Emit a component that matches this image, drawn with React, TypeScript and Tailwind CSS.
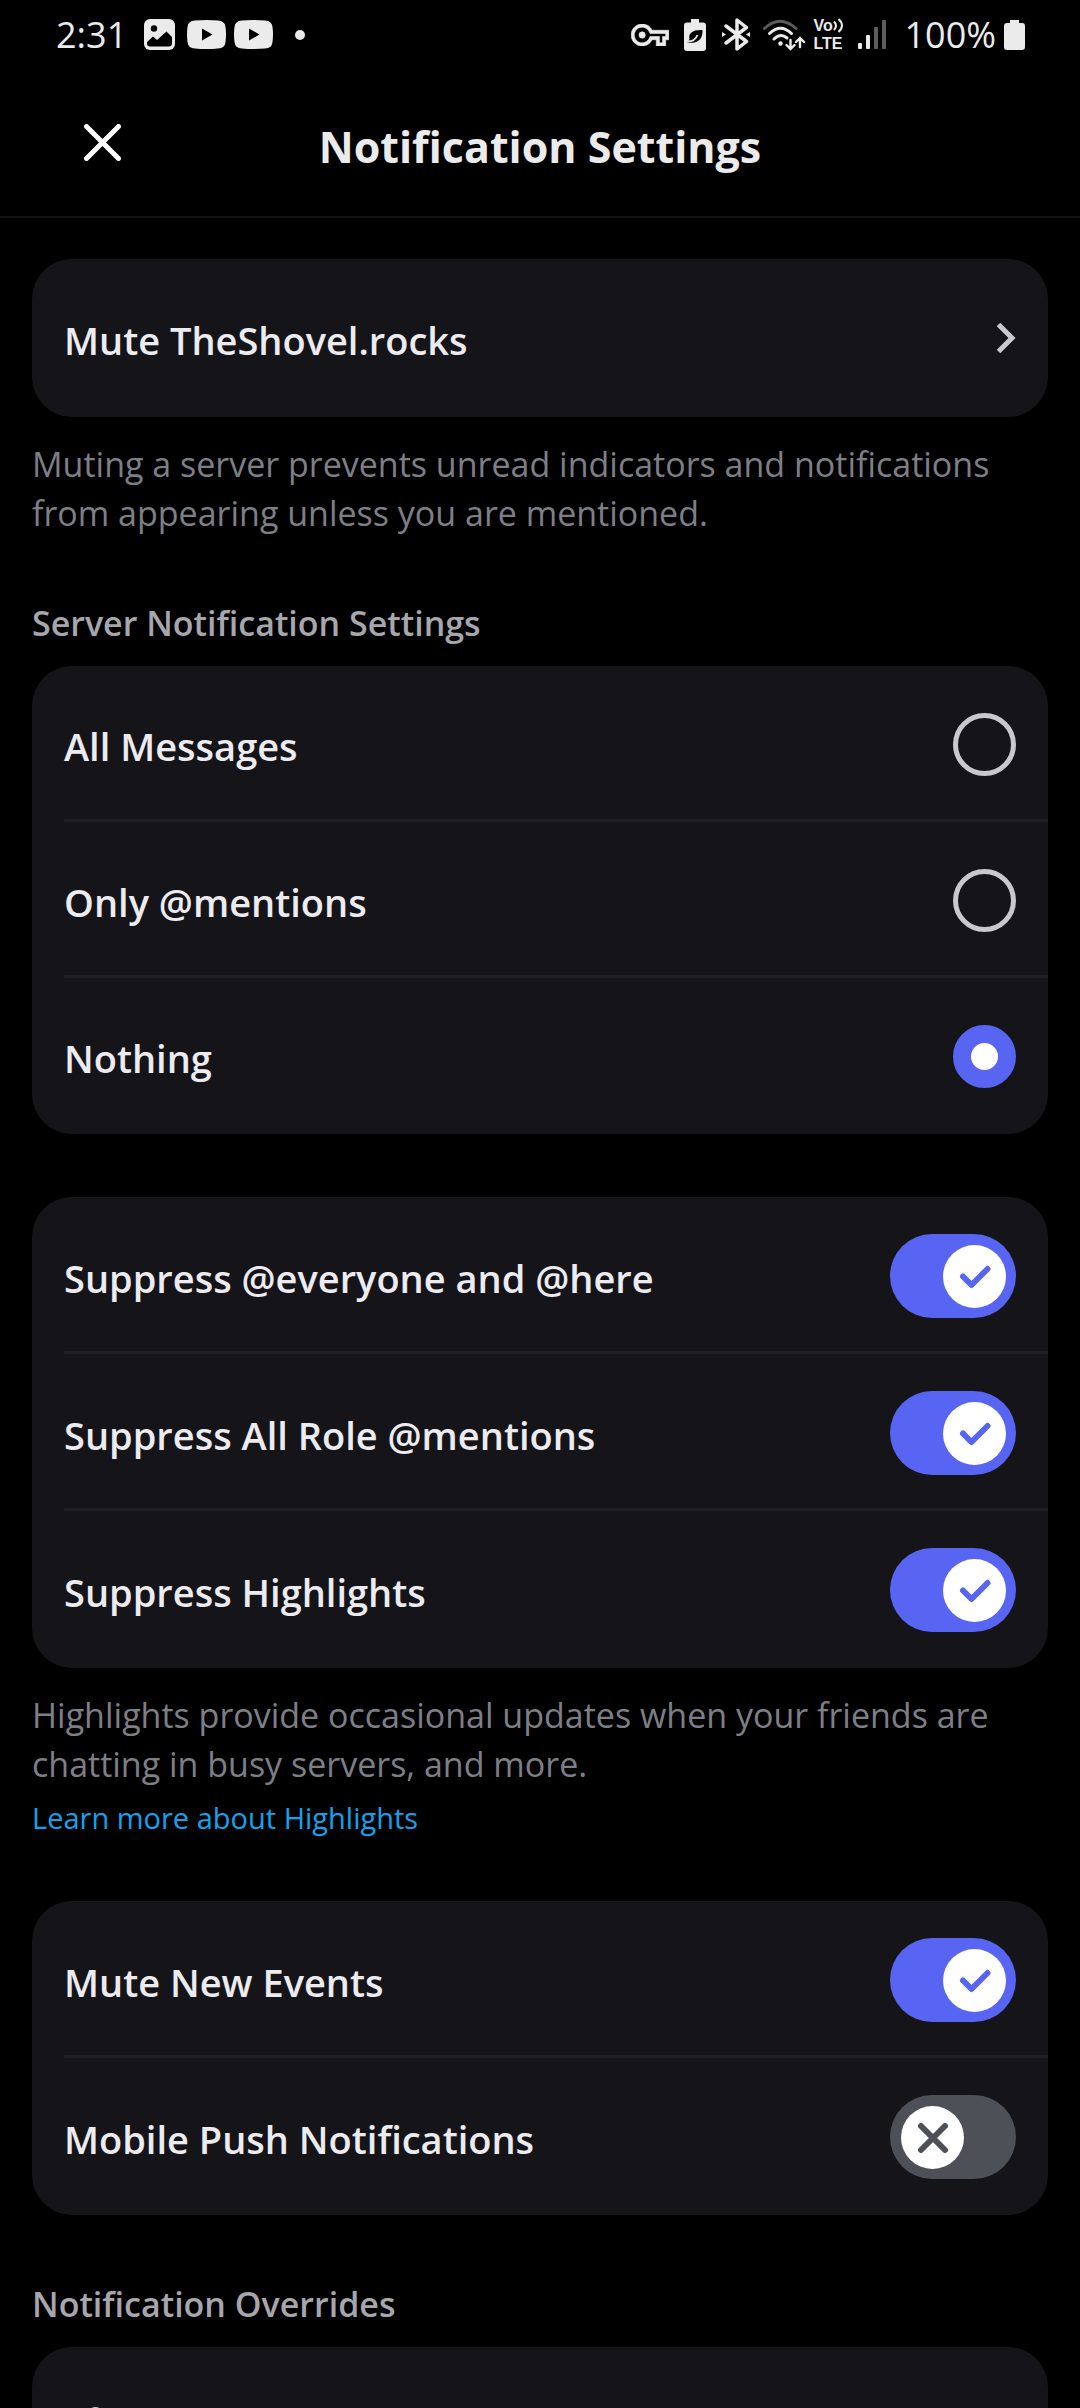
import { useState, type ReactNode } from 'react'

function StatusBar() {
  return (
    <div className="flex h-[69px] shrink-0 items-center justify-between pl-14 pr-[55px] text-[#ebebeb]">
      <div className="flex items-center">
        <span className="text-[36px] leading-[48px]">2:31</span>
        <svg className="ml-[17px]" width="31" height="31" viewBox="0 0 31 31" aria-hidden="true">
          <rect width="31" height="31" rx="6" fill="currentColor" />
          <circle cx="10" cy="9.5" r="3.2" />
          <path d="M3 23 9 17.5 13 21 22.5 12.5 28 18V24Q28 27.5 25 27.5H6Q3 27.5 3 24.5Z" />
        </svg>
        <VideoIcon className="ml-3" />
        <VideoIcon className="ml-2" />
        <span className="ml-[22px] size-[10px] rounded-full bg-current" />
      </div>
      <div className="flex items-center">
        <svg width="38" height="22" viewBox="0 5 24 14" fill="currentColor" stroke="currentColor" strokeWidth=".4" aria-hidden="true">
          <path d="M22 19h-6v-4h-2.68c-1.14 2.42-3.6 4-6.32 4-3.86 0-7-3.14-7-7s3.14-7 7-7c2.72 0 5.17 1.58 6.32 4H24v6h-2v4zm-4-2h2v-4h2v-2H11.94l-.23-.67C11.01 8.34 9.11 7 7 7c-2.76 0-5 2.24-5 5s2.24 5 5 5c2.11 0 4.01-1.34 4.71-3.33l.23-.67H18v4z" />
          <circle cx="7" cy="12" r="2" />
        </svg>
        <svg className="ml-[15px]" width="22" height="32" viewBox="0 0 22 32" aria-hidden="true">
          <path fill="currentColor" d="M7 0h8v3.5h4a3 3 0 0 1 3 3V29a3 3 0 0 1-3 3H3a3 3 0 0 1-3-3V6.500a3 3 0 0 1 3-3h4z" />
          <path d="M18.500 11C9 10.500 4 14 5.500 20L3.500 23.500C9 24.500 19 24 18.500 11Z" />
          <path d="M3.500 22.500C8 22.500 12 20 13.500 16" fill="none" stroke="currentColor" strokeWidth="1.800" />
        </svg>
        <svg className="ml-4" width="28" height="33" viewBox="0 0 28 33" fill="none" stroke="currentColor" strokeWidth="3.500" strokeLinecap="round" strokeLinejoin="round" aria-hidden="true">
          <path d="M4 8 24.500 23.500 15 31V2L24.500 9.500 4 25" />
          <path d="M0 14v5l4-2.500zM28 14v5l-4-2.500z" fill="currentColor" stroke="none" />
        </svg>
        <svg className="ml-[13px]" width="42" height="32" viewBox="0 0 42 32" fill="none" stroke="currentColor" strokeWidth="3" strokeLinecap="round" aria-hidden="true">
          <path d="M1.500 9.500Q17-5 33 9.500" stroke="#5c5c5c" />
          <path d="M6.500 14.500Q17.500 4 28.500 14.500M11 20Q17.500 13.500 24 19" />
          <circle cx="17.500" cy="24.500" r="2.200" fill="currentColor" stroke="none" />
          <path d="M27.500 21v9m-4-4 4 4 4-4M37 28V19m-4 4 4-4 4 4" strokeWidth="2.400" />
        </svg>
        <div className="ml-2 flex w-8 flex-col items-start font-['Liberation_Sans',sans-serif] text-[16px] font-bold leading-[18px]">
          <div className="flex items-center">
            <span>Vo</span>
            <svg width="11" height="15" viewBox="0 0 11 15" fill="none" stroke="currentColor" strokeWidth="2" aria-hidden="true">
              <path d="M1 3.500Q5 7.500 1 12M5.500 1Q12.500 7.500 5.500 14" />
            </svg>
          </div>
          <span>LTE</span>
        </div>
        <svg className="ml-[13px]" width="28" height="29" viewBox="0 0 28 29" fill="currentColor" aria-hidden="true">
          <rect y="23" width="4" height="6" rx="1" />
          <rect x="8" y="15" width="4" height="14" rx="1" />
          <rect x="16" y="7" width="4" height="22" rx="1" fill="#5c5c5c" />
          <rect x="24" width="4" height="29" rx="1" fill="#5c5c5c" />
        </svg>
        <span className="ml-[18px] text-[36px] leading-[48px]">100%</span>
        <svg className="ml-2" width="21" height="30" viewBox="0 0 21 30" fill="currentColor" aria-hidden="true">
          <path d="M6 0h9v3h3a3 3 0 0 1 3 3v21a3 3 0 0 1-3 3H3a3 3 0 0 1-3-3V6a3 3 0 0 1 3-3h3z" />
        </svg>
      </div>
    </div>
  )
}

function VideoIcon({ className }: { className: string }) {
  return (
    <svg className={className} width="39" height="29" viewBox="0 0 39 29" aria-hidden="true">
      <path fill="currentColor" d="M8 .5Q19.500-.5 31 .5Q38 1 38.500 7Q39.500 14.500 38.500 22Q38 28 31 28.500Q19.500 29.500 8 28.500Q1 28 .5 22Q-.5 14.500 .5 7Q1 1 8 .5Z" />
      <path d="M15 8.500v12l10.500-6z" />
    </svg>
  )
}

function Card({ children }: { children: ReactNode }) {
  return <div className="overflow-hidden rounded-[40px] bg-[#151419]">{children}</div>
}

function Divider() {
  return <div className="-mt-[3px] ml-8 h-[3px] bg-[#1f1f24]" />
}

const rowClass = 'flex w-full items-center justify-between px-8 text-left'
const labelClass = 'pt-1 text-[38px] font-semibold leading-[52px] text-[#ebebf0]'
const helpClass = 'mt-[23px] text-[34px] leading-[49px] text-[#7e7f86]'
const headingClass = 'mb-5 text-[34px] font-semibold leading-[45px] text-[#a6a6ac]'

function RadioRow({ label, checked, onSelect }: { label: string; checked: boolean; onSelect: () => void }) {
  return (
    <label className={`${rowClass} h-[156px]`}>
      <span className={labelClass}>{label}</span>
      <input
        type="radio"
        name="server-notifications"
        checked={checked}
        onChange={onSelect}
        className="size-[63px] shrink-0 appearance-none rounded-full border-[5px] border-[#c8c8cd] checked:border-[18px] checked:border-[#5865f2] checked:bg-white"
      />
    </label>
  )
}

function SwitchRow({ label, initial }: { label: string; initial: boolean }) {
  const [on, setOn] = useState(initial)
  return (
    <label className={`${rowClass} h-[157px]`}>
      <span className={labelClass}>{label}</span>
      <span className="relative h-[84px] w-[126px] shrink-0">
        <input
          type="checkbox"
          role="switch"
          checked={on}
          onChange={() => setOn(!on)}
          className="size-full appearance-none rounded-full bg-[#4e5058] checked:bg-[#5865f2]"
        />
        <svg
          className={`pointer-events-none absolute top-[11px] size-[63px] ${on ? 'right-[10px] text-[#5865f2]' : 'left-[11px] text-[#4e5058]'}`}
          viewBox="0 0 63 63"
          fill="none"
          stroke="currentColor"
          strokeWidth="6"
          strokeLinecap="round"
          strokeLinejoin="round"
          aria-hidden="true"
        >
          <circle cx="31.500" cy="31.500" r="31.500" fill="#fff" stroke="none" />
          {on ? <path d="M20 31.500 28.500 40 44.500 24" /> : <path d="M20 20 44 44M44 20 20 44" />}
        </svg>
      </span>
    </label>
  )
}

export default function App() {
  const [level, setLevel] = useState('Nothing')
  const levels = ['All Messages', 'Only @mentions', 'Nothing']
  return (
    <div className="flex h-screen flex-col bg-black font-['Open_Sans',sans-serif]">
      <StatusBar />
      <header className="grid h-[149px] shrink-0 grid-cols-[1fr_auto_1fr] items-center border-b-2 border-[#141414]">
        <button type="button" aria-label="Close" className="ml-[84px] size-[37px]">
          <svg viewBox="0 0 37 37" fill="none" stroke="#fff" strokeWidth="5" strokeLinecap="round" aria-hidden="true">
            <path d="M2.500 2.500 34.500 34.500M34.500 2.500 2.500 34.500" />
          </svg>
        </button>
        <h1 className="pt-2 text-[43px] font-bold leading-[56px] text-[#ebebeb]">Notification Settings</h1>
      </header>
      <main className="min-h-0 flex-1 overflow-y-auto px-8 pb-16 pt-[41px] [scrollbar-width:none]">
        <section>
          <Card>
            <button type="button" className={`${rowClass} h-[158px]`}>
              <span className={labelClass}>Mute TheShovel.rocks</span>
              <svg width="20" height="32" viewBox="0 0 20 32" fill="none" stroke="#c8c8cd" strokeWidth="5" aria-hidden="true">
                <path d="M2.500 2.500 16 16 2.500 29.500" />
              </svg>
            </button>
          </Card>
          <p className={helpClass}>
            Muting a server prevents unread indicators and notifications from appearing unless you are mentioned.
          </p>
        </section>

        <section className="mt-[63px]">
          <h2 className={headingClass}>Server Notification Settings</h2>
          <Card>
            {levels.map((name, i) => (
              <div key={name}>
                {i > 0 && <Divider />}
                <RadioRow label={name} checked={level === name} onSelect={() => setLevel(name)} />
              </div>
            ))}
          </Card>
        </section>

        <section className="mt-[63px]">
          <Card>
            <SwitchRow label="Suppress @everyone and @here" initial={true} />
            <Divider />
            <SwitchRow label="Suppress All Role @mentions" initial={true} />
            <Divider />
            <SwitchRow label="Suppress Highlights" initial={true} />
          </Card>
          <p className={helpClass}>
            Highlights provide occasional updates when your friends are chatting in busy servers, and more.
          </p>
          <a href="#highlights" className="mt-[9px] block w-fit text-[29px] font-medium leading-[40px] text-[#12a3ee]">
            Learn more about Highlights
          </a>
        </section>

        <section className="mt-[63px]">
          <Card>
            <SwitchRow label="Mute New Events" initial={true} />
            <Divider />
            <SwitchRow label="Mobile Push Notifications" initial={false} />
          </Card>
        </section>

        <section className="mt-[67px]">
          <h2 className={headingClass}>Notification Overrides</h2>
          <Card>
            <div className={`${rowClass} h-[156px]`}>
              <svg width="63" height="36" viewBox="0 0 63 36" fill="#c8c8cd" aria-hidden="true">
                <circle cx="31.500" cy="8" r="8" />
                <path d="M14 36a17.500 16 0 0 1 35 0z" />
              </svg>
            </div>
          </Card>
        </section>
      </main>
    </div>
  )
}
